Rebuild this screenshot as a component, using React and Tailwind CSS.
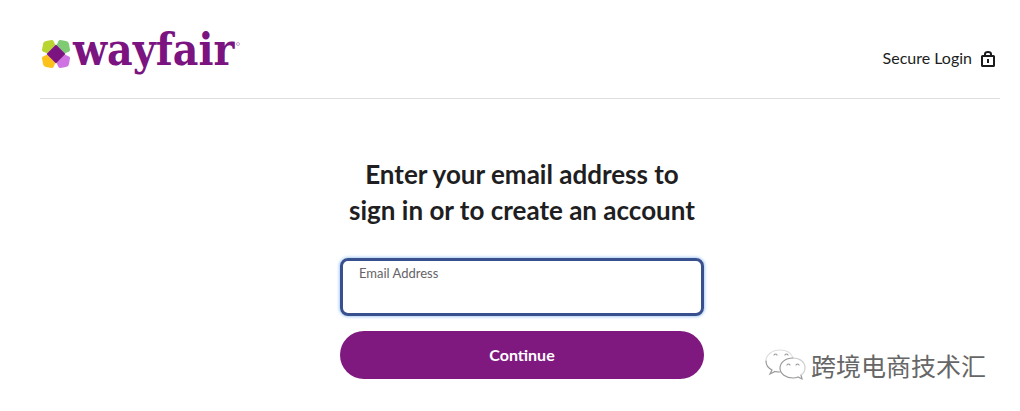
import React from "react";

const petals = [
  { angle: 0, color: "#b9d532" },
  { angle: 90, color: "#7fcb74" },
  { angle: 180, color: "#cf72e2" },
  { angle: 270, color: "#fcc21b" },
];

const WayfairLogo = () => (
  <a href="#home" aria-label="wayfair" className="flex items-center gap-0.5 pl-px">
    <svg viewBox="0 0 30 30" className="mt-2 w-[30px] h-[30px]">
      {petals.map(({ angle, color }) => (
        <path
          key={angle}
          d="M5.200 2 L10.500 1 Q11.800 0.800 12.500 2 L14 5.200 Q14.300 6 13.800 6.800 L6.800 13.800 Q6 14.300 5.200 14 L2 12.500 Q0.800 11.800 1 10.500 L2 5.200 Q2.300 3.800 3 3 Q3.800 2.300 5.200 2 Z"
          fill={color}
          transform={`rotate(${angle} 15 15)`}
        />
      ))}
      <path d="M15 5.500 L24.500 15 L15 24.500 L5.500 15 Z" fill="#7b1381" />
    </svg>
    <span className="font-['DejaVu_Serif_Condensed','DejaVu_Serif',serif] font-bold text-[44px] leading-[48px] text-[#7b1381]">
      wayfair
    </span>
    <span className="self-start mt-4 w-1 h-1 rounded-full border border-[#c9a9cc]" />
  </a>
);

const LockIcon = () => (
  <svg
    viewBox="0 0 16 18"
    className="w-4 h-[18px]"
    fill="none"
    stroke="#1b1b1d"
    strokeWidth="2"
    aria-hidden="true"
  >
    <rect x="2" y="7" width="12" height="10" rx="0.5" />
    <path d="M5 7 V5 Q5 3 8 3 Q11 3 11 5 V7" />
    <path d="M8 10 V14" />
  </svg>
);

const Watermark = () => (
  <div className="absolute right-[34px] bottom-7 flex items-center gap-1 text-[#666]">
    <svg
      viewBox="0 0 42 34"
      className="w-[42px] h-[34px]"
      fill="none"
      stroke="#9a9a9a"
      strokeWidth="1.2"
      strokeLinecap="round"
      aria-hidden="true"
    >
      <path d="M28 10 C26 4 20 2 15 2 C7 2 1 7 1 13" stroke="#dedede" />
      <path d="M1 13 C1 17 3 20 7 22 L5 26 L10 23.500 Q12 24 15 24" />
      <path d="M28 10 C20 10 15 15 15 20 C15 26 21 30 28 30 Q31 30 33 29 L37 31 L36 27" />
      <path d="M36 27 C39 25 40 23 40 20 C40 14 35 10 28 10" stroke="#cfcfcf" />
      <path d="M9 7 Q10.500 5 12 7 M20 7 Q21.500 5 23 7 M22 17 Q23.500 15 25 17 M31 17 Q32.500 15 34 17" />
    </svg>
    <span className="font-['Noto_Sans_CJK_SC',sans-serif] font-normal text-[25px] leading-9">
      跨境电商技术汇
    </span>
  </div>
);

const App = () => {
  return (
    <div className="relative min-h-screen bg-white pl-10 pr-5 font-[Lato,sans-serif] text-[#211e22]">
      <header className="flex justify-between items-end h-[99px] pb-6 border-b border-[#dfdfe0]">
        <WayfairLogo />
        <div className="flex items-center gap-2 pr-1 pb-1 text-base">
          Secure Login
          <LockIcon />
        </div>
      </header>

      <main className="pl-1 pt-[57px]">
        <form
          className="w-full max-w-[364px] mx-auto"
          onSubmit={(e) => e.preventDefault()}
        >
          <h1 className="text-center text-[26px] leading-9 font-bold">
            Enter your email address to
            <br />
            sign in or to create an account
          </h1>
          <div className="mt-[30px] h-[58px] flex flex-col rounded-lg border-3 border-[#39508f] shadow-[0_0_3px_1px_#a9cdf5] px-4 pt-1">
            <label htmlFor="email" className="text-[13px] leading-4 text-[#656367]">
              Email Address
            </label>
            <input
              id="email"
              type="email"
              className="w-full flex-1 min-h-0 text-base outline-none"
            />
          </div>
          <button
            type="submit"
            className="mt-[15px] w-full h-12 rounded-full bg-[#7f187f] text-white text-base font-bold"
          >
            Continue
          </button>
        </form>
      </main>

      <Watermark />
    </div>
  );
};

export default App;
